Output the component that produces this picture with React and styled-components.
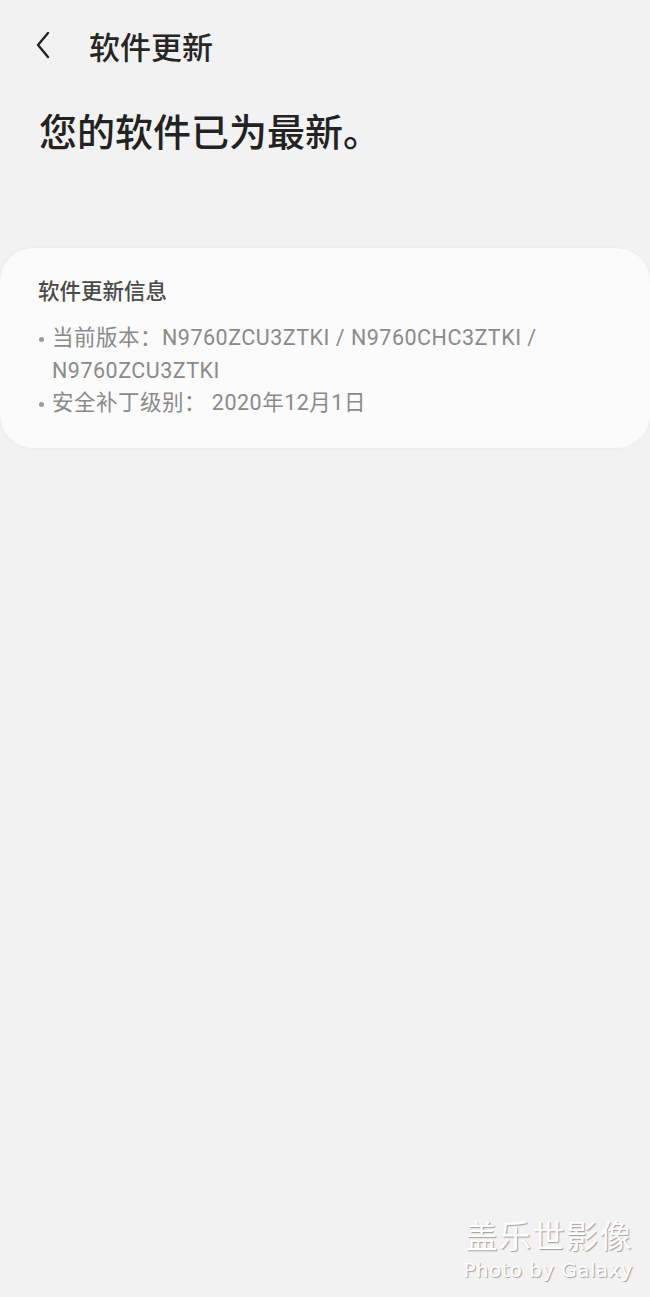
import styled, { createGlobalStyle } from "styled-components";

const GlobalStyle = createGlobalStyle`
  body {
    margin: 0;
    background: #f2f2f2;
    font-family: "Noto Sans", "Noto Sans CJK SC", sans-serif;
  }
`;

const Screen = styled.div`
  position: relative;
  width: 650px;
  min-height: 1297px;
  background: #f2f2f2;
  overflow: hidden;
`;

const TopBar = styled.div`
  height: 60px;
  padding-top: 15px;
  display: flex;
  align-items: center;
`;

const BackButton = styled.button`
  width: 50px;
  height: 40px;
  margin-left: 18px;
  padding: 0;
  border: none;
  background: none;
  display: flex;
  align-items: center;
  justify-content: center;
`;

const BarTitle = styled.div`
  margin-left: 21px;
  font-family: "Noto Sans CJK SC", sans-serif;
  font-size: 31px;
  font-weight: 500;
  color: #262626;
`;

const Headline = styled.h1`
  margin: 31px 0 0 39px;
  font-family: "Noto Sans CJK SC", sans-serif;
  font-size: 38px;
  font-weight: 500;
  line-height: 48px;
  color: #222;
`;

const Card = styled.section`
  margin-top: 94px;
  padding: 27px 38px 28px;
  background: #fbfbfb;
  border-radius: 34px;
  box-shadow: 0 0 4px rgba(0, 0, 0, 0.04);
`;

const CardTitle = styled.div`
  font-family: "Noto Sans CJK SC", sans-serif;
  font-size: 21.5px;
  font-weight: 500;
  line-height: 30px;
  color: #4a4a4a;
`;

const InfoList = styled.ul`
  margin: 17px 0 0;
  padding: 0;
  list-style: none;
`;

const InfoItem = styled.li`
  position: relative;
  padding-left: 14px;
  font-family: "Roboto", "Noto Sans CJK SC", sans-serif;
  font-size: 21.5px;
  line-height: 32.5px;
  letter-spacing: 0.5px;
  color: #8a8a8a;

  &::before {
    content: "";
    position: absolute;
    left: 1px;
    top: 15px;
    width: 5px;
    height: 5px;
    border-radius: 50%;
    background: #9a9a9a;
  }
`;

const Watermark = styled.div`
  position: absolute;
  right: 17px;
  bottom: 16px;
  display: flex;
  flex-direction: column;
  align-items: flex-end;
  gap: 8px;
  color: #fff;
  text-shadow: 1px 1px 1px rgba(0, 0, 0, 0.35);
`;

const MarkCn = styled.div`
  font-family: "Noto Sans CJK SC", sans-serif;
  font-size: 32px;
  line-height: 34px;
  letter-spacing: 1.5px;
`;

const MarkEn = styled.div`
  font-family: "DejaVu Sans", sans-serif;
  font-size: 20px;
  line-height: 22px;
  letter-spacing: 0.4px;
`;

export default function App() {
  return (
    <Screen>
      <GlobalStyle />
      <TopBar>
        <BackButton>
          <svg width="16" height="28" viewBox="0 0 16 28" fill="none">
            <path d="M13 2 L3 14 L13 26" stroke="#222" strokeWidth="2.4" strokeLinecap="round" strokeLinejoin="round" />
          </svg>
        </BackButton>
        <BarTitle>软件更新</BarTitle>
      </TopBar>
      <Headline>您的软件已为最新。</Headline>
      <Card>
        <CardTitle>软件更新信息</CardTitle>
        <InfoList>
          <InfoItem>当前版本：N9760ZCU3ZTKI / N9760CHC3ZTKI / N9760ZCU3ZTKI</InfoItem>
          <InfoItem>安全补丁级别： 2020年12月1日</InfoItem>
        </InfoList>
      </Card>
      <Watermark>
        <MarkCn>盖乐世影像</MarkCn>
        <MarkEn>Photo by Galaxy</MarkEn>
      </Watermark>
    </Screen>
  );
}
